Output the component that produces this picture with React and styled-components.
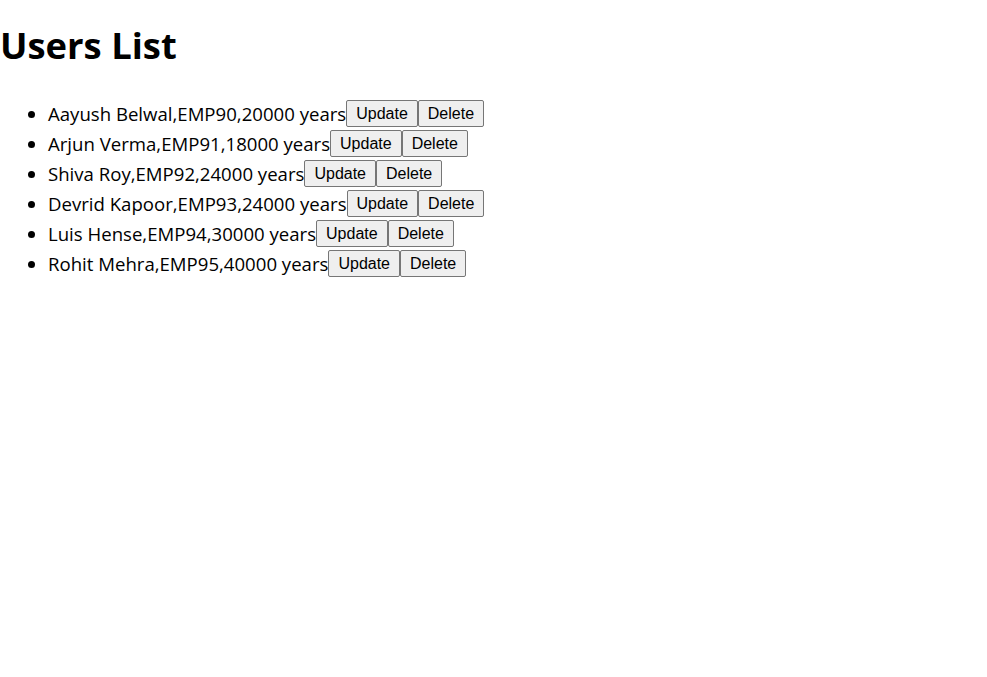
import React from "react";
import styled, { createGlobalStyle } from "styled-components";

const GlobalStyle = createGlobalStyle`
  html, body {
    margin: 0;
    padding: 0;
    background: #ffffff;
  }
  body {
    font-family: "Open Sans", "Noto Sans", sans-serif;
    color: #000000;
  }
`;

const Page = styled.div`
  padding-top: 21px;
`;

const Title = styled.h1`
  margin: 0 0 31px 0;
  font-size: 36.4px;
  line-height: 48px;
  font-weight: 700;
`;

const List = styled.ul`
  margin: 0;
  padding-left: 48px;
  font-size: 18.6px;
`;

const Item = styled.li`
  height: 30px;
  line-height: 27px;
`;

const Button = styled.button`
  font-family: "Liberation Sans", Arial, sans-serif;
  font-size: 16px;
  height: 27px;
  padding: 1px 9px;
  color: #000000;
  background: #efefef;
  border: 1px solid #767676;
  border-radius: 2px;
  vertical-align: top;
  margin: 0;
`;

const users = [
  { name: "Aayush Belwal", id: "EMP90", salary: 20000 },
  { name: "Arjun Verma", id: "EMP91", salary: 18000 },
  { name: "Shiva Roy", id: "EMP92", salary: 24000 },
  { name: "Devrid Kapoor", id: "EMP93", salary: 24000 },
  { name: "Luis Hense", id: "EMP94", salary: 30000 },
  { name: "Rohit Mehra", id: "EMP95", salary: 40000 },
];

const App = () => {
  return (
    <Page>
      <GlobalStyle />
      <Title>Users List</Title>
      <List>
        {users.map((u) => (
          <Item key={u.id}>
            {u.name},{u.id},{u.salary} years
            <Button>Update</Button>
            <Button>Delete</Button>
          </Item>
        ))}
      </List>
    </Page>
  );
};

export default App;
